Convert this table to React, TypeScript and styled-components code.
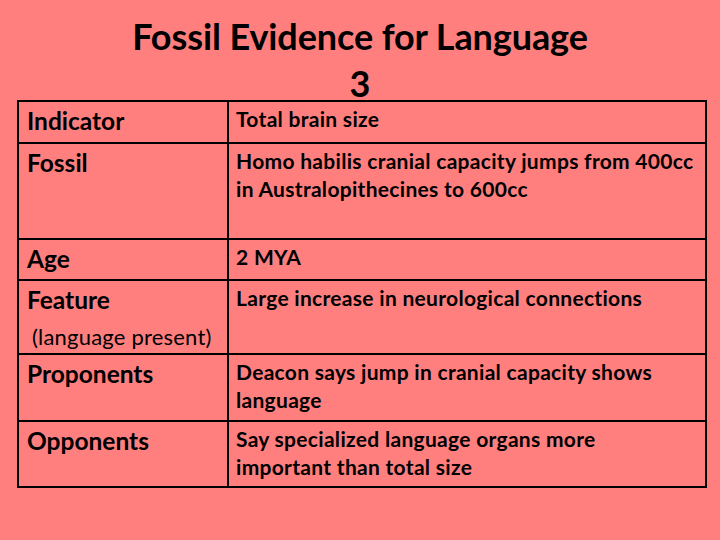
import React from 'react';
import styled, { createGlobalStyle } from 'styled-components';

const GlobalStyle = createGlobalStyle`
  html, body {
    margin: 0;
    padding: 0;
    background: #ff7f7f;
  }
  body {
    font-family: Lato, "Open Sans", sans-serif;
    color: #000;
  }
`;

const Slide = styled.div`
  width: 720px;
  height: 540px;
  background: #ff7f7f;
  overflow: hidden;
`;

const Header = styled.header`
  height: 100px;
  padding-top: 13px;
  box-sizing: border-box;
`;

const Title = styled.h1`
  margin: 0;
  font-size: 36px;
  font-weight: 700;
  line-height: 47px;
  text-align: center;
  letter-spacing: -0.1px;
`;

const Table = styled.div`
  margin-left: 17px;
  width: 686px;
  border: 2px solid #000;
  display: grid;
  grid-template-columns: 210px 1fr;
  grid-template-rows: 42px 96px 41px 74px 67px 64px;
`;

const Cell = styled.div<{ $last?: boolean; $right?: boolean }>`
  box-sizing: border-box;
  border-bottom: ${(p) => (p.$last ? 'none' : '2px solid #000')};
  border-right: ${(p) => (p.$right ? 'none' : '2px solid #000')};
`;

const Label = styled(Cell)`
  padding: 4px 6px 0 8px;
  font-size: 24.5px;
  font-weight: 700;
  line-height: 30px;
`;

const Note = styled.div`
  margin-top: 7px;
  padding-left: 5px;
  font-size: 22px;
  font-weight: 400;
  line-height: 30px;
  letter-spacing: 0.2px;
`;

const Content = styled(Cell)`
  padding: 3px 4px 0 7px;
  font-size: 21px;
  font-weight: 700;
  line-height: 28px;
  letter-spacing: 0.3px;
`;

const Line = styled.span`
  display: block;
  white-space: nowrap;
`;

const rows: { label: string; note?: string; lines: string[] }[] = [
  { label: 'Indicator', lines: ['Total brain size'] },
  {
    label: 'Fossil',
    lines: ['Homo habilis cranial capacity jumps from 400cc', 'in Australopithecines to 600cc'],
  },
  { label: 'Age', lines: ['2 MYA'] },
  {
    label: 'Feature',
    note: '(language present)',
    lines: ['Large increase in neurological connections'],
  },
  { label: 'Proponents', lines: ['Deacon says jump in cranial capacity shows', 'language'] },
  { label: 'Opponents', lines: ['Say specialized language organs more', 'important than total size'] },
];

export default function App() {
  return (
    <Slide>
      <GlobalStyle />
      <Header>
        <Title>
          Fossil Evidence for Language
          <br />3
        </Title>
      </Header>
      <Table>
        {rows.map((row, i) => {
          const last = i === rows.length - 1;
          return (
            <React.Fragment key={row.label}>
              <Label $last={last}>
                {row.label}
                {row.note && <Note>{row.note}</Note>}
              </Label>
              <Content $last={last} $right>
                {row.lines.map((line) => (
                  <Line key={line}>{line}</Line>
                ))}
              </Content>
            </React.Fragment>
          );
        })}
      </Table>
    </Slide>
  );
}
